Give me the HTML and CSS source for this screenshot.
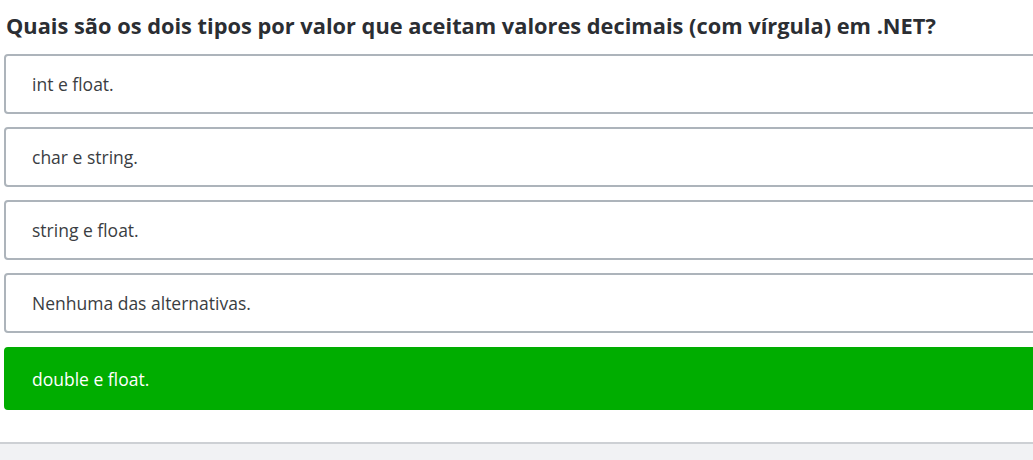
FILE: index.html
```html
<!DOCTYPE html>
<html lang="pt">
<head>
<meta charset="utf-8">
<link rel="stylesheet" href="styles.css">
</head>
<body>
<div class="quiz">
  <h2 class="question">Quais são os dois tipos por valor que aceitam valores decimais (com vírgula) em .NET?</h2>
  <div class="options">
    <div class="option">int e float.</div>
    <div class="option">char e string.</div>
    <div class="option">string e float.</div>
    <div class="option">Nenhuma das alternativas.</div>
    <div class="option correct">double e float.</div>
  </div>
</div>
<div class="footer"></div>
</body>
</html>
```

FILE: styles.css
```css
html, body {
  margin: 0;
  padding: 0;
  overflow: hidden;
  background: #fff;
  font-family: "Open Sans", "Liberation Sans", sans-serif;
}
.quiz {
  padding: 0 0 0 4px;
  height: 442px;
  box-sizing: border-box;
}
.question {
  margin: 0;
  padding: 12px 0 0 2px;
  height: 54px;
  box-sizing: border-box;
  font-size: 21.8px;
  font-weight: 700;
  color: #2b2e33;
  line-height: 28px;
  white-space: nowrap;
}
.options {
  display: flex;
  flex-direction: column;
  gap: 13px;
  margin-right: -20px;
}
.option {
  height: 60px;
  box-sizing: border-box;
  border: 2px solid #adb4bb;
  border-radius: 4px;
  display: flex;
  align-items: center;
  padding-left: 26px;
  font-size: 17.5px;
  color: #3a3d42;
}
.option.correct {
  height: 63px;
  margin-top: 1px;
  border-color: #00ad00;
  background: #00ad00;
  color: #fff;
  font-weight: 500;
}
.footer {
  height: 18px;
  border-top: 2px solid #cdd0d4;
  background: #f1f2f4;
}
```
